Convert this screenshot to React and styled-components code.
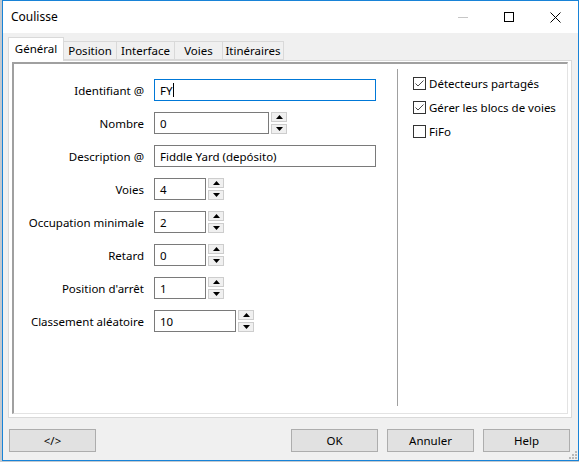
import styled, { createGlobalStyle } from "styled-components";

const fields = [
  { label: "Identifiant @", value: "FY", width: 222, focused: true },
  { label: "Nombre", value: "0", width: 115, spin: true },
  { label: "Description @", value: "Fiddle Yard (depósito)", width: 222 },
  { label: "Voies", value: "4", width: 52, spin: true },
  { label: "Occupation minimale", value: "2", width: 52, spin: true },
  { label: "Retard", value: "0", width: 52, spin: true },
  { label: "Position d'arrêt", value: "1", width: 52, spin: true },
  { label: "Classement aléatoire", value: "10", width: 82, spin: true },
];

const tabs = [
  { name: "Général", width: 56, active: true },
  { name: "Position", width: 54 },
  { name: "Interface", width: 59 },
  { name: "Voies", width: 49 },
  { name: "Itinéraires", width: 62 },
];

const options = [
  { label: "Détecteurs partagés", checked: true },
  { label: "Gérer les blocs de voies", checked: true },
  { label: "FiFo", checked: false },
];

function App() {
  return (
    <>
      <GlobalStyle />
      <Window>
        <TitleBar>
          <Title>Coulisse</Title>
          <WinButton>
            <svg width="10" height="10" viewBox="0 0 10 10">
              <line x1="0" y1="5.5" x2="10" y2="5.5" stroke="#c6c6c6" strokeWidth="1" />
            </svg>
          </WinButton>
          <WinButton>
            <svg width="10" height="10" viewBox="0 0 10 10">
              <rect x="0.5" y="0.5" width="9" height="9" fill="none" stroke="#000" strokeWidth="1" />
            </svg>
          </WinButton>
          <WinButton>
            <svg width="11" height="11" viewBox="0 0 11 11">
              <path d="M0.5 0.5 L10.5 10.5 M10.5 0.5 L0.5 10.5" stroke="#000" strokeWidth="1" />
            </svg>
          </WinButton>
        </TitleBar>

        <Main>
          <TabStrip>
            {tabs.map((t) => (
              <Tab key={t.name} $width={t.width} $active={t.active}>
                {t.name}
              </Tab>
            ))}
          </TabStrip>

          <Panel>
            <Inner>
              <FormColumn>
                {fields.map((f) => (
                  <FormRow key={f.label}>
                    <Label>{f.label}</Label>
                    <Control>
                      <Field $width={f.width} $focused={f.focused}>
                        {f.value}
                        {f.focused && <Caret />}
                      </Field>
                      {f.spin && (
                        <Spinner>
                          <SpinButton>
                            <svg width="7" height="4" viewBox="0 0 7 4">
                              <path d="M0 4 L3.5 0 L7 4 Z" fill="#000" />
                            </svg>
                          </SpinButton>
                          <SpinButton>
                            <svg width="7" height="4" viewBox="0 0 7 4">
                              <path d="M0 0 L7 0 L3.5 4 Z" fill="#000" />
                            </svg>
                          </SpinButton>
                        </Spinner>
                      )}
                    </Control>
                  </FormRow>
                ))}
              </FormColumn>
              <Separator />
              <OptionsColumn>
                {options.map((o) => (
                  <CheckRow key={o.label}>
                    <CheckBox>
                      {o.checked && (
                        <svg width="11" height="11" viewBox="0 0 11 11">
                          <polyline points="1.5,5.5 4,8 9.5,2.5" fill="none" stroke="#4a4a4a" strokeWidth="1" />
                        </svg>
                      )}
                    </CheckBox>
                    {o.label}
                  </CheckRow>
                ))}
              </OptionsColumn>
            </Inner>
          </Panel>

          <Footer>
            <Button>&lt;/&gt;</Button>
            <Spacer />
            <Button>OK</Button>
            <Button>Annuler</Button>
            <Button>Help</Button>
          </Footer>
        </Main>

        <Grip>
          <svg width="10" height="10" viewBox="0 0 10 10" fill="#b8b8b8">
            <rect x="8" y="2" width="2" height="2" />
            <rect x="5" y="5" width="2" height="2" />
            <rect x="8" y="5" width="2" height="2" />
            <rect x="2" y="8" width="2" height="2" />
            <rect x="5" y="8" width="2" height="2" />
            <rect x="8" y="8" width="2" height="2" />
          </svg>
        </Grip>
      </Window>
    </>
  );
}

export default App;

const GlobalStyle = createGlobalStyle`
  html, body {
    margin: 0;
    padding: 0;
    background: #c4c9cf;
  }
  body {
    font-family: "Segoe UI", "Noto Sans", sans-serif;
    font-size: 11.5px;
    color: #000;
  }
`;

const Window = styled.div`
  position: relative;
  box-sizing: border-box;
  margin-left: 2px;
  width: 577px;
  height: 461px;
  border: 1px solid #1883d7;
  background: #f0f0f0;
  display: flex;
  flex-direction: column;
  overflow: hidden;
`;

const TitleBar = styled.div`
  height: 32px;
  flex-shrink: 0;
  background: #fff;
  display: flex;
  align-items: center;
  padding-left: 8px;
  font-size: 12px;
`;

const Title = styled.div`
  flex: 1;
  padding-bottom: 1px;
`;

const WinButton = styled.div`
  width: 46px;
  height: 32px;
  display: flex;
  align-items: center;
  justify-content: center;
`;

const Main = styled.div`
  flex: 1;
  display: flex;
  flex-direction: column;
  padding: 4px 6px 0 5px;
`;

const TabStrip = styled.div`
  height: 23px;
  display: flex;
  align-items: flex-end;
`;

const Tab = styled.div`
  box-sizing: border-box;
  width: ${(p) => p.$width}px;
  height: ${(p) => (p.$active ? 24 : 19)}px;
  margin-bottom: ${(p) => (p.$active ? -1 : 0)}px;
  margin-left: -1px;
  &:first-child {
    margin-left: 0;
  }
  border: 1px solid #d9d9d9;
  border-bottom: ${(p) => (p.$active ? "none" : "1px solid #d9d9d9")};
  background: ${(p) => (p.$active ? "#fff" : "#f0f0f0")};
  position: relative;
  z-index: ${(p) => (p.$active ? 2 : 1)};
  display: flex;
  align-items: center;
  justify-content: center;
  padding-bottom: ${(p) => (p.$active ? 2 : 0)}px;
`;

const Panel = styled.div`
  box-sizing: border-box;
  height: 358px;
  border: 1px solid #d9d9d9;
  background: #fff;
  padding: 1px 3px 3px 3px;
  display: flex;
`;

const Inner = styled.div`
  flex: 1;
  display: flex;
  border-top: 2px solid #a0a0a0;
  border-left: 2px solid #a0a0a0;
  border-right: 1px solid #e3e3e3;
  border-bottom: 1px solid #e3e3e3;
`;

const FormColumn = styled.div`
  width: 383px;
  padding-top: 15px;
  display: flex;
  flex-direction: column;
  gap: 11px;
`;

const FormRow = styled.div`
  display: grid;
  grid-template-columns: 130px 1fr;
  column-gap: 10px;
  height: 22px;
`;

const Label = styled.div`
  display: flex;
  align-items: center;
  justify-content: flex-end;
  white-space: nowrap;
`;

const Control = styled.div`
  display: flex;
  align-items: center;
`;

const Field = styled.div`
  box-sizing: border-box;
  width: ${(p) => p.$width}px;
  height: 22px;
  border: 1px solid ${(p) => (p.$focused ? "#0078d7" : "#7a7a7a")};
  padding-left: 5px;
  display: flex;
  align-items: center;
  white-space: nowrap;
`;

const Caret = styled.span`
  display: inline-block;
  width: 1px;
  height: 14px;
  background: #000;
  margin-left: 1px;
`;

const Spinner = styled.div`
  margin-left: 2px;
  display: flex;
  flex-direction: column;
  gap: 2px;
`;

const SpinButton = styled.div`
  box-sizing: border-box;
  width: 16px;
  height: 10px;
  border: 1px solid #cdcdcd;
  background: #f0f0f0;
  display: flex;
  align-items: center;
  justify-content: center;
`;

const Separator = styled.div`
  width: 1px;
  background: #a0a0a0;
  margin: 5px 0 7px;
`;

const OptionsColumn = styled.div`
  padding: 13px 0 0 15px;
  display: flex;
  flex-direction: column;
  gap: 11px;
`;

const CheckRow = styled.div`
  height: 13px;
  display: flex;
  align-items: center;
  gap: 3px;
  white-space: nowrap;
`;

const CheckBox = styled.div`
  box-sizing: border-box;
  width: 13px;
  height: 13px;
  border: 1px solid #333;
  background: #fff;
  display: flex;
  align-items: center;
  justify-content: center;
`;

const Footer = styled.div`
  margin: 11px 2px 0 1px;
  display: flex;
  gap: 9px;
`;

const Spacer = styled.div`
  flex: 1;
`;

const Button = styled.button`
  box-sizing: border-box;
  width: 87px;
  height: 23px;
  border: 1px solid #adadad;
  background: #e1e1e1;
  font-family: "Segoe UI", "Noto Sans", sans-serif;
  font-size: 11.5px;
  color: #000;
  padding: 0;
`;

const Grip = styled.div`
  position: absolute;
  right: 1px;
  bottom: 1px;
  width: 10px;
  height: 10px;
  display: flex;
`;
